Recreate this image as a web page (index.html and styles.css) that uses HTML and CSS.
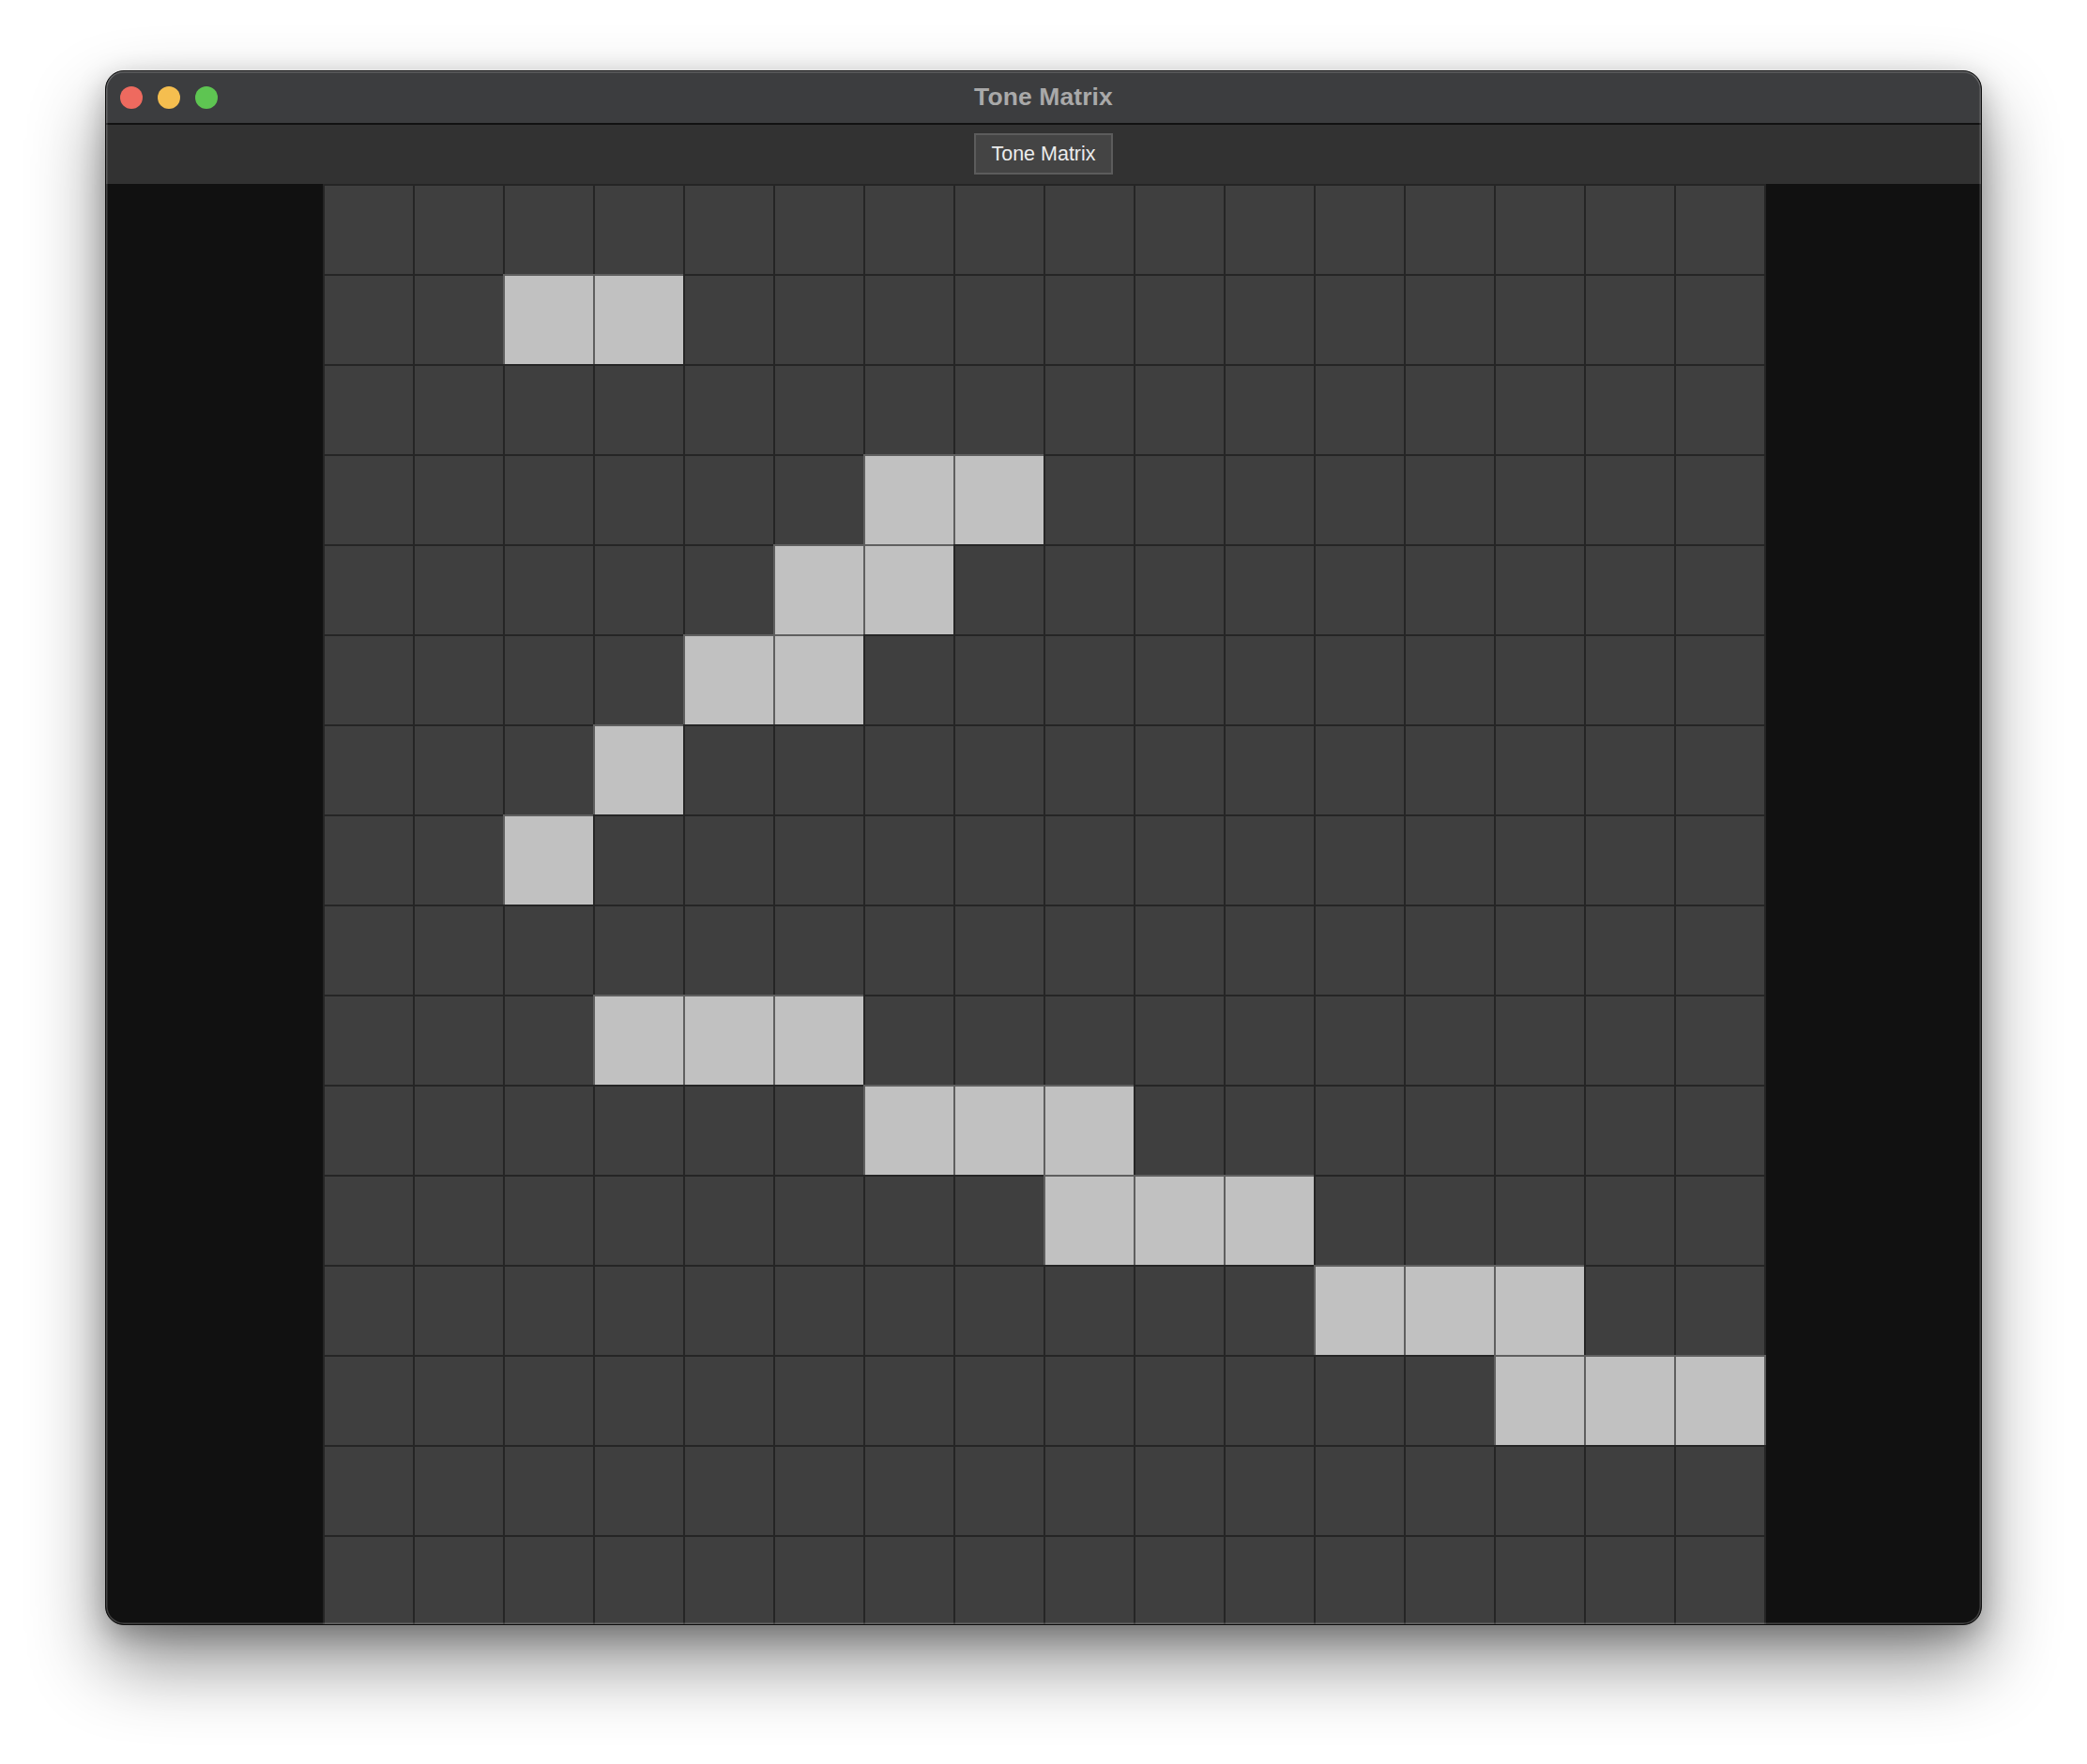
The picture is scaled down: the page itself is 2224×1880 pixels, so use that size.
FILE: index.html
```html
<!DOCTYPE html>
<html lang="en">
<head>
<meta charset="utf-8">
<title>Tone Matrix</title>
<link rel="stylesheet" href="styles.css">
</head>
<body>
<div class="desk">
  <div class="window">
    <header class="titlebar">
      <div class="lights">
        <span class="light red"></span>
        <span class="light yellow"></span>
        <span class="light green"></span>
      </div>
      <div class="title">Tone Matrix</div>
    </header>
    <div class="toolbar">
      <button class="tab">Tone Matrix</button>
    </div>
    <main class="stage">
      <div class="matrix">
        <i class="c"></i><i class="c"></i><i class="c"></i><i class="c"></i><i class="c"></i><i class="c"></i><i class="c"></i><i class="c"></i><i class="c"></i><i class="c"></i><i class="c"></i><i class="c"></i><i class="c"></i><i class="c"></i><i class="c"></i><i class="c"></i>
        <i class="c"></i><i class="c"></i><i class="c on"></i><i class="c on"></i><i class="c"></i><i class="c"></i><i class="c"></i><i class="c"></i><i class="c"></i><i class="c"></i><i class="c"></i><i class="c"></i><i class="c"></i><i class="c"></i><i class="c"></i><i class="c"></i>
        <i class="c"></i><i class="c"></i><i class="c"></i><i class="c"></i><i class="c"></i><i class="c"></i><i class="c"></i><i class="c"></i><i class="c"></i><i class="c"></i><i class="c"></i><i class="c"></i><i class="c"></i><i class="c"></i><i class="c"></i><i class="c"></i>
        <i class="c"></i><i class="c"></i><i class="c"></i><i class="c"></i><i class="c"></i><i class="c"></i><i class="c on"></i><i class="c on"></i><i class="c"></i><i class="c"></i><i class="c"></i><i class="c"></i><i class="c"></i><i class="c"></i><i class="c"></i><i class="c"></i>
        <i class="c"></i><i class="c"></i><i class="c"></i><i class="c"></i><i class="c"></i><i class="c on"></i><i class="c on"></i><i class="c"></i><i class="c"></i><i class="c"></i><i class="c"></i><i class="c"></i><i class="c"></i><i class="c"></i><i class="c"></i><i class="c"></i>
        <i class="c"></i><i class="c"></i><i class="c"></i><i class="c"></i><i class="c on"></i><i class="c on"></i><i class="c"></i><i class="c"></i><i class="c"></i><i class="c"></i><i class="c"></i><i class="c"></i><i class="c"></i><i class="c"></i><i class="c"></i><i class="c"></i>
        <i class="c"></i><i class="c"></i><i class="c"></i><i class="c on"></i><i class="c"></i><i class="c"></i><i class="c"></i><i class="c"></i><i class="c"></i><i class="c"></i><i class="c"></i><i class="c"></i><i class="c"></i><i class="c"></i><i class="c"></i><i class="c"></i>
        <i class="c"></i><i class="c"></i><i class="c on"></i><i class="c"></i><i class="c"></i><i class="c"></i><i class="c"></i><i class="c"></i><i class="c"></i><i class="c"></i><i class="c"></i><i class="c"></i><i class="c"></i><i class="c"></i><i class="c"></i><i class="c"></i>
        <i class="c"></i><i class="c"></i><i class="c"></i><i class="c"></i><i class="c"></i><i class="c"></i><i class="c"></i><i class="c"></i><i class="c"></i><i class="c"></i><i class="c"></i><i class="c"></i><i class="c"></i><i class="c"></i><i class="c"></i><i class="c"></i>
        <i class="c"></i><i class="c"></i><i class="c"></i><i class="c on"></i><i class="c on"></i><i class="c on"></i><i class="c"></i><i class="c"></i><i class="c"></i><i class="c"></i><i class="c"></i><i class="c"></i><i class="c"></i><i class="c"></i><i class="c"></i><i class="c"></i>
        <i class="c"></i><i class="c"></i><i class="c"></i><i class="c"></i><i class="c"></i><i class="c"></i><i class="c on"></i><i class="c on"></i><i class="c on"></i><i class="c"></i><i class="c"></i><i class="c"></i><i class="c"></i><i class="c"></i><i class="c"></i><i class="c"></i>
        <i class="c"></i><i class="c"></i><i class="c"></i><i class="c"></i><i class="c"></i><i class="c"></i><i class="c"></i><i class="c"></i><i class="c on"></i><i class="c on"></i><i class="c on"></i><i class="c"></i><i class="c"></i><i class="c"></i><i class="c"></i><i class="c"></i>
        <i class="c"></i><i class="c"></i><i class="c"></i><i class="c"></i><i class="c"></i><i class="c"></i><i class="c"></i><i class="c"></i><i class="c"></i><i class="c"></i><i class="c"></i><i class="c on"></i><i class="c on"></i><i class="c on"></i><i class="c"></i><i class="c"></i>
        <i class="c"></i><i class="c"></i><i class="c"></i><i class="c"></i><i class="c"></i><i class="c"></i><i class="c"></i><i class="c"></i><i class="c"></i><i class="c"></i><i class="c"></i><i class="c"></i><i class="c"></i><i class="c on"></i><i class="c on"></i><i class="c on"></i>
        <i class="c"></i><i class="c"></i><i class="c"></i><i class="c"></i><i class="c"></i><i class="c"></i><i class="c"></i><i class="c"></i><i class="c"></i><i class="c"></i><i class="c"></i><i class="c"></i><i class="c"></i><i class="c"></i><i class="c"></i><i class="c"></i>
        <i class="c"></i><i class="c"></i><i class="c"></i><i class="c"></i><i class="c"></i><i class="c"></i><i class="c"></i><i class="c"></i><i class="c"></i><i class="c"></i><i class="c"></i><i class="c"></i><i class="c"></i><i class="c"></i><i class="c"></i><i class="c"></i>
      </div>
    </main>
  </div>
</div>
</body>
</html>
```

FILE: styles.css
```css
html, body {
  margin: 0;
  padding: 0;
  background: #ffffff;
}
body {
  width: 2224px;
  height: 1880px;
  overflow: hidden;
  font-family: "Liberation Sans", Arial, sans-serif;
}
.desk {
  padding: 75px 112px 0 112px;
}
.window {
  position: relative;
  width: 2000px;
  height: 1657px;
  box-sizing: border-box;
  border: 1px solid #0c0c0c;
  border-radius: 20px;
  overflow: hidden;
  background: #111111;
  display: flex;
  flex-direction: column;
  box-shadow: 0 40px 80px rgba(0, 0, 0, 0.45), 0 10px 30px rgba(0, 0, 0, 0.25);
}
.window::after {
  content: "";
  position: absolute;
  inset: 0;
  border-radius: 19px;
  box-shadow: inset 0 0 0 1.5px rgba(255, 255, 255, 0.2);
  pointer-events: none;
}
.titlebar {
  height: 55px;
  flex: none;
  background: #3c3d3f;
  border-bottom: 2px solid #121212;
  display: flex;
  align-items: center;
  position: relative;
}
.lights {
  display: flex;
  gap: 16px;
  padding-left: 15px;
  padding-top: 1px;
}
.light {
  width: 24px;
  height: 24px;
  border-radius: 50%;
  display: block;
}
.red { background: #ee6a5f; }
.yellow { background: #f5be4f; }
.green { background: #5ec552; }
.title {
  position: absolute;
  left: 0;
  right: 0;
  top: 12px;
  text-align: center;
  font-weight: 700;
  font-size: 26.5px;
  color: #a9a9a9;
  letter-spacing: 0.1px;
}
.toolbar {
  height: 63px;
  flex: none;
  background: #323232;
  display: flex;
  justify-content: center;
  align-items: flex-start;
  padding-top: 9px;
  box-sizing: border-box;
}
.tab {
  width: 148px;
  height: 44px;
  box-sizing: border-box;
  border: 2px solid #5c5c5c;
  background: #444444;
  color: #ececec;
  font-family: "Liberation Sans", Arial, sans-serif;
  font-size: 21.5px;
  padding: 0;
  border-radius: 0;
}
.stage {
  flex: 1;
  min-height: 0;
  background: #111111;
  display: flex;
  justify-content: center;
  padding-left: 1px;
}
.matrix {
  display: grid;
  grid-template-columns: repeat(16, auto);
  align-content: start;
}
.c {
  display: block;
  width: 94px;
  height: 94px;
  background: #3f3f3f;
  border-top: 2px solid #252525;
  border-left: 2px solid #252525;
}
.c:nth-child(16n) {
  border-right: 2px solid #252525;
}
.c.on {
  background: #c1c1c1;
  border-color: #5f5f5f;
}
```
